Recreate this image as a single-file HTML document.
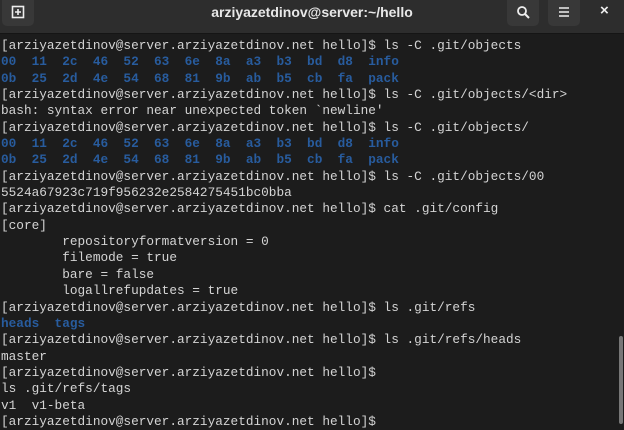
<!DOCTYPE html>
<html><head><style>
body{margin:0;width:624px;height:429px;background:#1c1c1c;overflow:hidden;font-family:"Liberation Sans",sans-serif}
.hb{position:absolute;top:0;left:0;width:624px;height:33px;background:#2d2d2d;border-bottom:1px solid #151515}
.title{position:absolute;top:0;left:0;width:624px;text-align:center;line-height:24px;color:#e8e8e8;font-size:14px;font-weight:bold}
.btn{position:absolute;top:0;height:26px;width:32px;background:#383838;border-radius:0 0 5px 5px;color:#eee;text-align:center;line-height:24px;font-size:15px}
pre{position:absolute;left:1px;top:38px;margin:0;font-family:"Liberation Mono",monospace;font-size:12.75px;line-height:16.35px;color:#d4d4d4}
b{color:#285c9e}
.sb{position:absolute;right:1px;top:336px;width:4px;height:88px;background:#777;border-radius:2px}
</style></head><body>
<div class="hb"></div>
<div class="btn" style="left:2px"><svg width="14" height="14" viewBox="0 0 14 14" style="margin-top:5px"><rect x="1.5" y="1.5" width="11" height="11" fill="none" stroke="#eee" stroke-width="1.6"/><path d="M7 4v6M4 7h6" stroke="#eee" stroke-width="1.6"/></svg></div>
<div class="title">arziyazetdinov@server:~/hello</div>
<div class="btn" style="left:507px"><svg width="14" height="14" viewBox="0 0 14 14" style="margin-top:5px"><circle cx="6" cy="6" r="4" fill="none" stroke="#eee" stroke-width="1.8"/><path d="M9 9l4 4" stroke="#eee" stroke-width="2"/></svg></div>
<div class="btn" style="left:548px"><svg width="14" height="14" viewBox="0 0 14 14" style="margin-top:5px"><path d="M2 3h10M2 7h10M2 11h10" stroke="#eee" stroke-width="1.6"/></svg></div>
<div style="position:absolute;left:600px;top:2px;color:#eee;font-size:15px;font-weight:bold">×</div>
<pre>[arziyazetdinov@server.arziyazetdinov.net hello]$ ls -C .git/objects
<b>00  11  2c  46  52  63  6e  8a  a3  b3  bd  d8  info</b>
<b>0b  25  2d  4e  54  68  81  9b  ab  b5  cb  fa  pack</b>
[arziyazetdinov@server.arziyazetdinov.net hello]$ ls -C .git/objects/&lt;dir&gt;
bash: syntax error near unexpected token `newline'
[arziyazetdinov@server.arziyazetdinov.net hello]$ ls -C .git/objects/
<b>00  11  2c  46  52  63  6e  8a  a3  b3  bd  d8  info</b>
<b>0b  25  2d  4e  54  68  81  9b  ab  b5  cb  fa  pack</b>
[arziyazetdinov@server.arziyazetdinov.net hello]$ ls -C .git/objects/00
5524a67923c719f956232e2584275451bc0bba
[arziyazetdinov@server.arziyazetdinov.net hello]$ cat .git/config
[core]
        repositoryformatversion = 0
        filemode = true
        bare = false
        logallrefupdates = true
[arziyazetdinov@server.arziyazetdinov.net hello]$ ls .git/refs
<b>heads  tags</b>
[arziyazetdinov@server.arziyazetdinov.net hello]$ ls .git/refs/heads
master
[arziyazetdinov@server.arziyazetdinov.net hello]$
ls .git/refs/tags
v1  v1-beta
[arziyazetdinov@server.arziyazetdinov.net hello]$</pre>
<div class="sb"></div>
</body></html>
